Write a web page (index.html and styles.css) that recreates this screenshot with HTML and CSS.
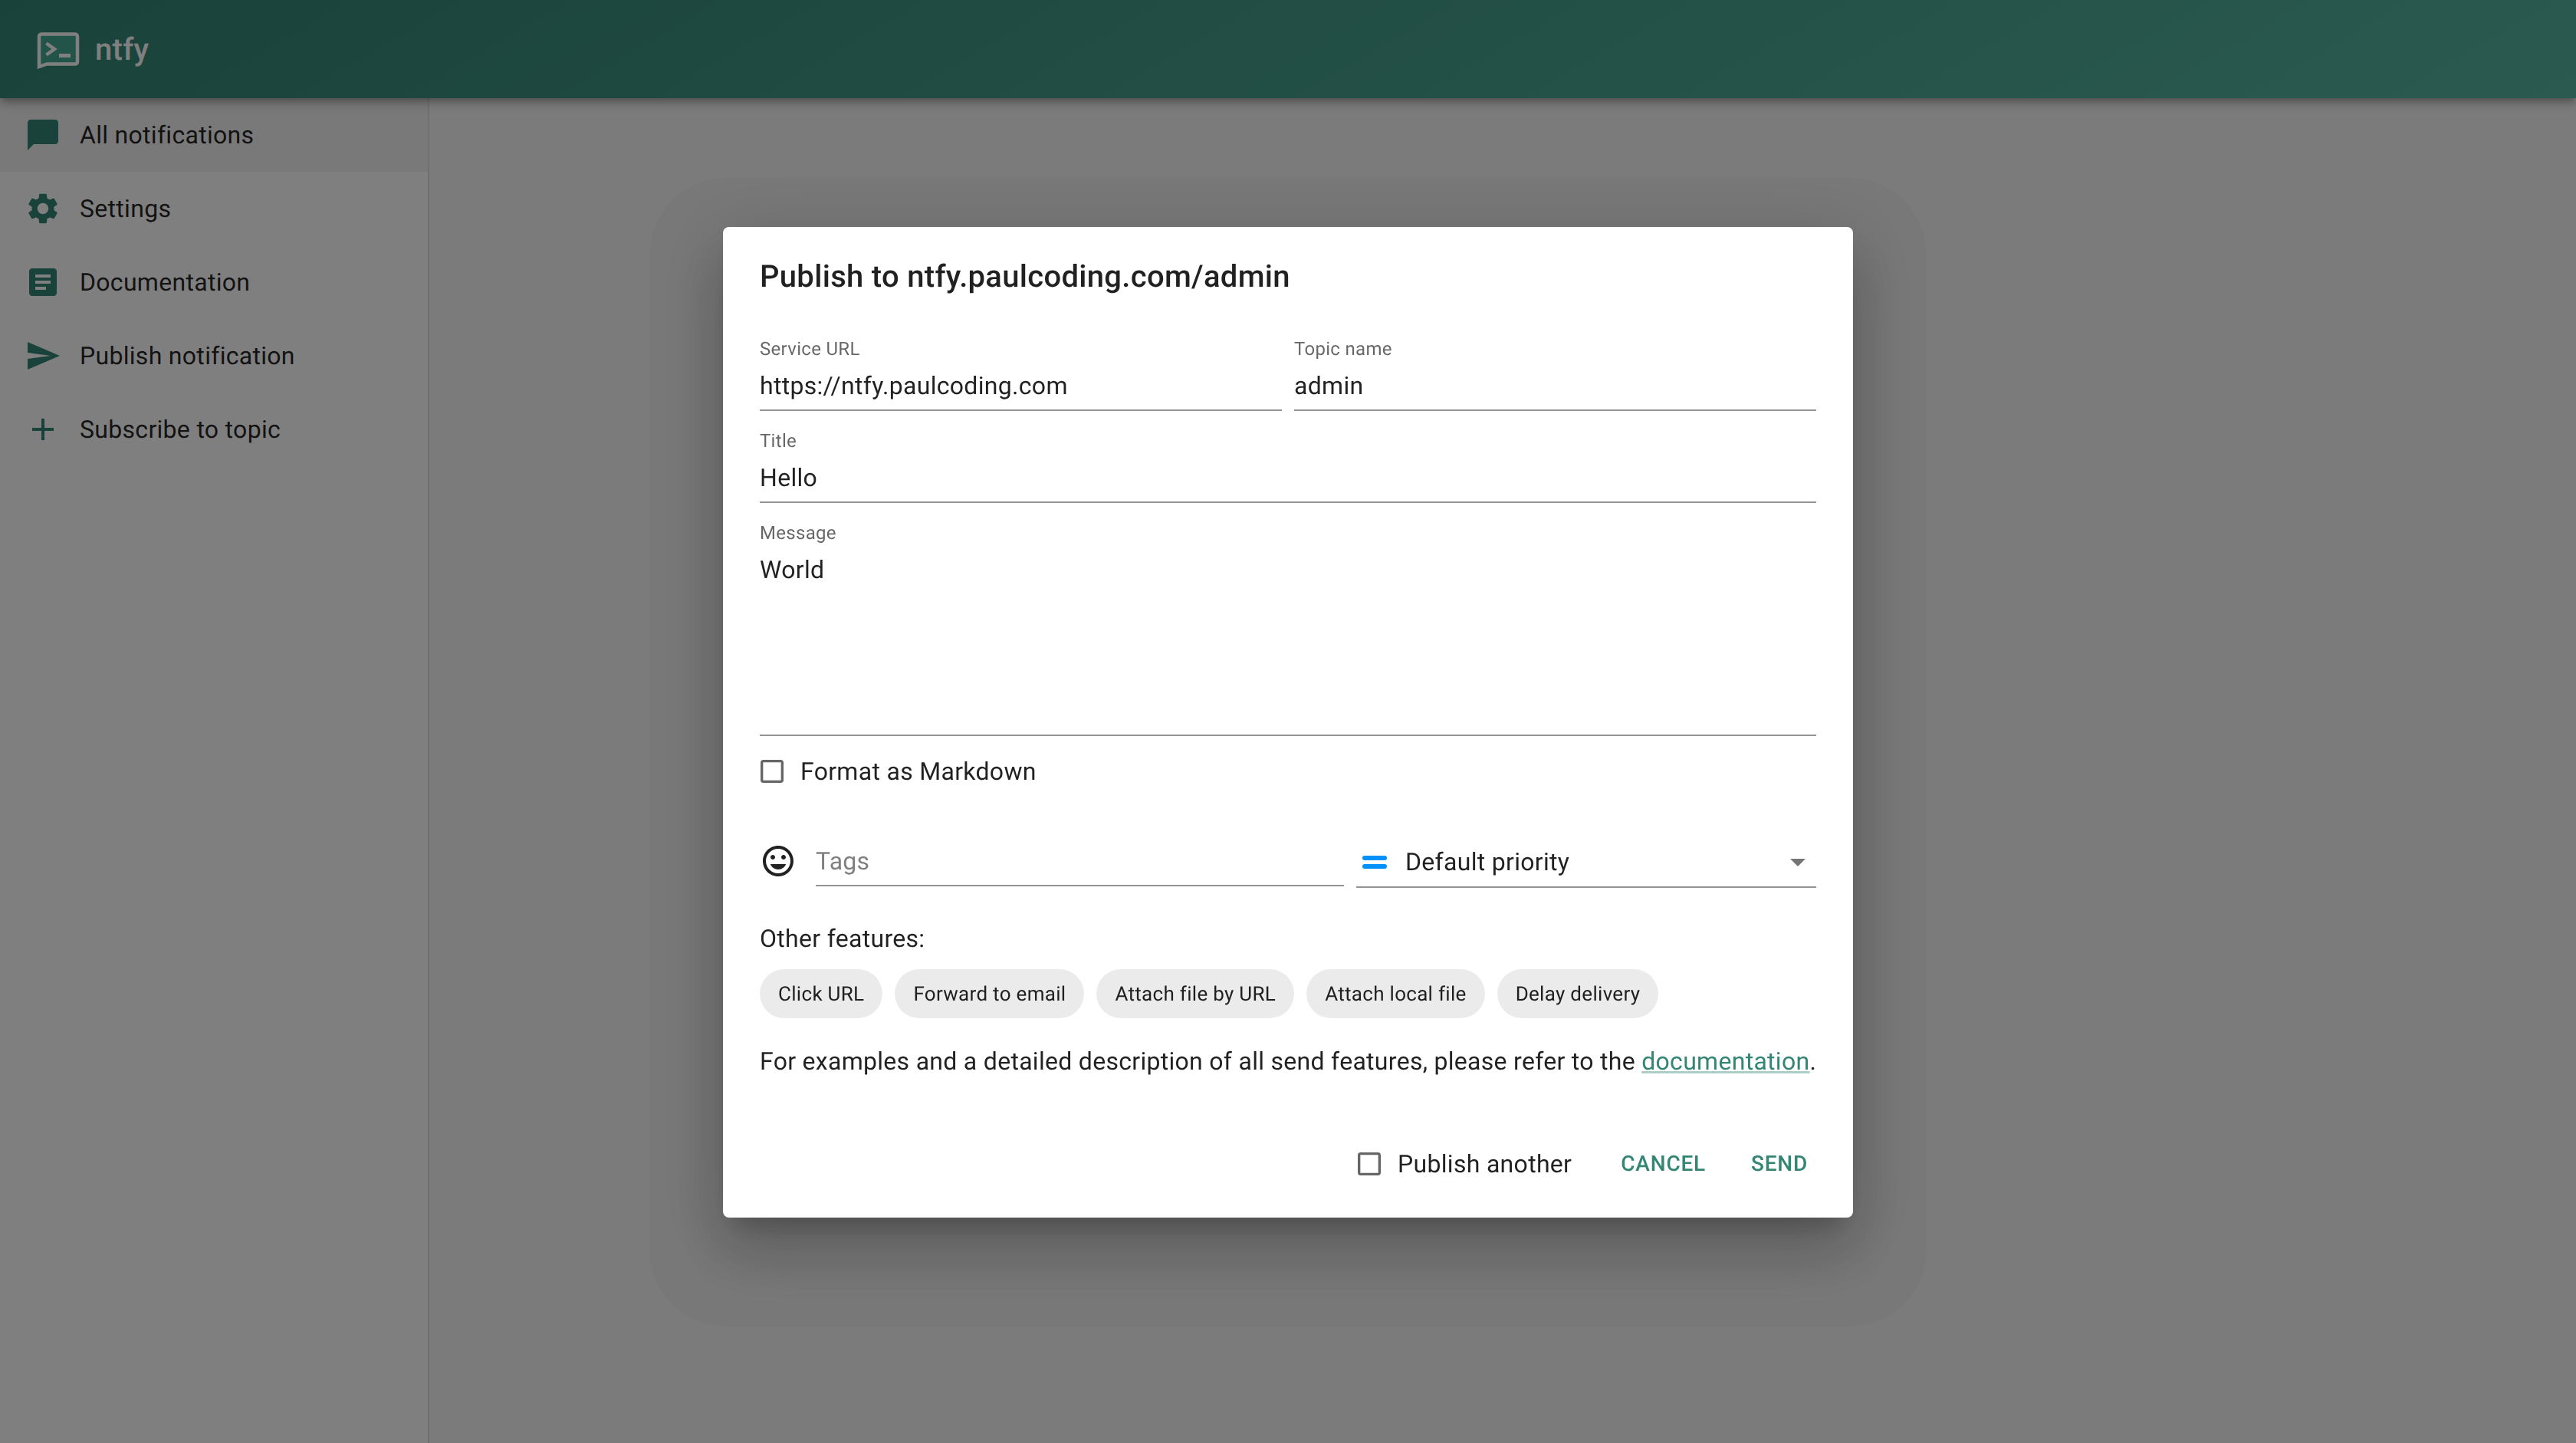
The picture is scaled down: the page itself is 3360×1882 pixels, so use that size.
FILE: index.html
```html
<!DOCTYPE html>
<html lang="en">
<head>
    <meta charset="UTF-8">
    <meta name="viewport" content="width=device-width, initial-scale=1.0">
    <title>ntfy</title>
    <link rel="stylesheet" href="styles.css">
</head>
<body>
    <header class="app-bar">
        <svg class="logo" viewBox="0 0 56 48">
            <path d="M6 2.500h44a3 3 0 0 1 3 3v33a3 3 0 0 1-3 3H13L3 45V5.500a3 3 0 0 1 3-3z" fill="#46a894" stroke="#fff" stroke-width="4.500"/>
            <path d="M12.500 14.500L23 22l-10.500 7.500" fill="none" stroke="#fff" stroke-width="4.500"/>
            <path d="M29 30.500h15" fill="none" stroke="#fff" stroke-width="5"/>
        </svg>
        <span class="app-name">ntfy</span>
    </header>

    <div class="layout">
        <nav class="sidebar">
            <a class="nav-item selected">
                <svg class="nav-icon" viewBox="0 0 24 24"><path d="M20 2H4c-1.1 0-1.99.9-1.99 2L2 22l4-4h14c1.1 0 2-.9 2-2V4c0-1.1-.9-2-2-2z"/></svg>
                <span>All notifications</span>
            </a>
            <a class="nav-item">
                <svg class="nav-icon" viewBox="0 0 24 24"><path d="M19.14 12.94c.04-.3.06-.61.06-.94 0-.32-.02-.64-.07-.94l2.03-1.58c.18-.14.23-.41.12-.61l-1.92-3.32c-.12-.22-.37-.29-.59-.22l-2.39.96c-.5-.38-1.03-.7-1.62-.94l-.36-2.54c-.04-.24-.24-.41-.48-.41h-3.84c-.24 0-.43.17-.47.41l-.36 2.54c-.59.24-1.13.57-1.62.94l-2.39-.96c-.22-.08-.47 0-.59.22L2.74 8.87c-.12.21-.08.47.12.61l2.03 1.58c-.05.3-.09.63-.09.94s.02.64.07.94l-2.03 1.58c-.18.14-.23.41-.12.61l1.92 3.32c.12.22.37.29.59.22l2.39-.96c.5.38 1.03.7 1.62.94l.36 2.54c.05.24.24.41.48.41h3.84c.24 0 .44-.17.47-.41l.36-2.54c.59-.24 1.13-.56 1.62-.94l2.39.96c.22.08.47 0 .59-.22l1.92-3.32c.12-.22.07-.47-.12-.61l-2.01-1.58zM12 15.6c-1.98 0-3.6-1.62-3.6-3.6s1.62-3.6 3.6-3.6 3.6 1.62 3.6 3.6-1.62 3.6-3.6 3.6z"/></svg>
                <span>Settings</span>
            </a>
            <a class="nav-item">
                <svg class="nav-icon" viewBox="0 0 24 24"><path d="M19 3H5c-1.1 0-2 .9-2 2v14c0 1.1.9 2 2 2h14c1.1 0 2-.9 2-2V5c0-1.1-.9-2-2-2zm-5 14H7v-2h7v2zm3-4H7v-2h10v2zm0-4H7V7h10v2z"/></svg>
                <span>Documentation</span>
            </a>
            <a class="nav-item">
                <svg class="nav-icon" viewBox="0 0 24 24"><path d="M2.01 21 23 12 2.01 3 2 10l15 2-15 2z"/></svg>
                <span>Publish notification</span>
            </a>
            <a class="nav-item">
                <svg class="nav-icon" viewBox="0 0 24 24"><path d="M19 13h-6v6h-2v-6H5v-2h6V5h2v6h6v2z"/></svg>
                <span>Subscribe to topic</span>
            </a>
        </nav>
        <main class="content"></main>
    </div>

    <div class="backdrop"></div>

    <div class="dialog-wrap">
        <section class="dialog">
            <h2 class="dialog-title">Publish to ntfy.paulcoding.com/admin</h2>

            <div class="dialog-body">
                <div class="field-row">
                    <div class="field">
                        <label class="field-label">Service URL</label>
                        <div class="field-value">https://ntfy.paulcoding.com</div>
                    </div>
                    <div class="field">
                        <label class="field-label">Topic name</label>
                        <div class="field-value">admin</div>
                    </div>
                </div>

                <div class="field field-spaced">
                    <label class="field-label">Title</label>
                    <div class="field-value">Hello</div>
                </div>

                <div class="field field-spaced">
                    <label class="field-label">Message</label>
                    <div class="field-value field-multiline">World</div>
                </div>

                <div class="check-row markdown-row">
                    <svg class="check-icon" viewBox="0 0 24 24"><path d="M19 5v14H5V5h14m0-2H5c-1.1 0-2 .9-2 2v14c0 1.1.9 2 2 2h14c1.1 0 2-.9 2-2V5c0-1.1-.9-2-2-2z"/></svg>
                    <span>Format as Markdown</span>
                </div>

                <div class="tags-row">
                    <div class="emoji-cell">
                        <svg class="emoji-icon" viewBox="0 0 24 24"><path d="M11.99 2C6.47 2 2 6.48 2 12s4.47 10 9.99 10C17.52 22 22 17.52 22 12S17.52 2 11.99 2zM12 20c-4.42 0-8-3.58-8-8s3.58-8 8-8 8 3.58 8 8-3.58 8-8 8zm3.5-9c.83 0 1.5-.67 1.5-1.5S16.33 8 15.5 8 14 8.67 14 9.5s.67 1.5 1.5 1.5zm-7 0c.83 0 1.5-.67 1.5-1.5S9.33 8 8.5 8 7 8.67 7 9.5 7.67 11 8.5 11zm3.5 6.5c2.33 0 4.31-1.46 5.11-3.5H6.89c.8 2.04 2.78 3.5 5.11 3.5z"/></svg>
                    </div>
                    <div class="tags-input">Tags</div>
                    <div class="priority-select">
                        <svg class="priority-icon" viewBox="0 0 32 17">
                            <rect x="0" y="0" width="32" height="6" rx="3"/>
                            <rect x="0" y="11" width="32" height="6" rx="3"/>
                        </svg>
                        <span class="priority-text">Default priority</span>
                        <svg class="select-arrow" viewBox="0 0 20 10"><path d="M0 0h20L10 10z"/></svg>
                    </div>
                </div>

                <div class="features-label">Other features:</div>
                <div class="chips">
                    <span class="chip">Click URL</span>
                    <span class="chip">Forward to email</span>
                    <span class="chip">Attach file by URL</span>
                    <span class="chip">Attach local file</span>
                    <span class="chip">Delay delivery</span>
                </div>

                <p class="help-text">For examples and a detailed description of all send features, please refer to the <a class="help-link">documentation</a>.</p>
            </div>

            <div class="dialog-actions">
                <div class="check-row publish-another">
                    <svg class="check-icon" viewBox="0 0 24 24"><path d="M19 5v14H5V5h14m0-2H5c-1.1 0-2 .9-2 2v14c0 1.1.9 2 2 2h14c1.1 0 2-.9 2-2V5c0-1.1-.9-2-2-2z"/></svg>
                    <span>Publish another</span>
                </div>
                <button class="text-button">Cancel</button>
                <button class="text-button">Send</button>
            </div>
        </section>
    </div>
</body>
</html>
```

FILE: styles.css
```css
* {
    box-sizing: border-box;
}

html, body {
    height: 100%;
}

body {
    margin: 0;
    font-family: Roboto, "Liberation Sans", sans-serif;
    font-size: 32px;
    letter-spacing: 0.00938em;
    text-rendering: geometricPrecision;
    color: rgba(0, 0, 0, 0.87);
    background-color: #f7f7f7;
    display: flex;
    flex-direction: column;
    overflow: hidden;
}

.app-bar {
    position: relative;
    z-index: 2;
    height: 128px;
    flex-shrink: 0;
    padding-left: 48px;
    display: flex;
    align-items: center;
    background: linear-gradient(150deg, #338574 0%, #56b5a0 100%);
    box-shadow: 0 4px 8px -2px rgba(0, 0, 0, 0.2), 0 8px 10px 0 rgba(0, 0, 0, 0.14), 0 2px 20px 0 rgba(0, 0, 0, 0.12);
}

.logo {
    width: 56px;
    height: 48px;
    margin-top: 4px;
    margin-right: 20px;
}

.app-name {
    font-size: 40px;
    font-weight: 500;
    letter-spacing: 0.0075em;
    color: #fff;
}

.layout {
    flex: 1;
    display: flex;
}

.sidebar {
    width: 560px;
    background-color: #fff;
    border-right: 2px solid rgba(0, 0, 0, 0.12);
}

.nav-item {
    height: 96px;
    padding-left: 32px;
    display: flex;
    align-items: center;
}

.nav-item.selected {
    background-color: rgba(0, 0, 0, 0.05);
}

.nav-icon {
    width: 48px;
    height: 48px;
    margin-right: 24px;
    fill: #338574;
}

.content {
    flex: 1;
}

.backdrop {
    position: fixed;
    inset: 0;
    z-index: 5;
    background-color: rgba(0, 0, 0, 0.5);
}

.dialog-wrap {
    position: fixed;
    inset: 0;
    z-index: 6;
    padding-top: 2px;
    display: flex;
    align-items: center;
    justify-content: center;
}

.dialog {
    position: relative;
    width: 1474px;
    background-color: #fff;
    border-radius: 8px;
    box-shadow: 0 22px 30px -14px rgba(0, 0, 0, 0.2), 0 48px 76px 6px rgba(0, 0, 0, 0.14), 0 18px 92px 16px rgba(0, 0, 0, 0.12);
}

/* outer edge of the shadow, it shows as a soft step in the backdrop */
.dialog::before {
    content: "";
    position: absolute;
    inset: -64px -96px -142px;
    z-index: -1;
    background-color: rgba(0, 0, 0, 0.025);
    border-radius: 100px;
}

.dialog-title {
    margin: 0;
    padding: 33px 48px 31px;
    font-size: 40px;
    font-weight: 500;
    line-height: 64px;
    letter-spacing: 0.0075em;
}

.dialog-body {
    padding: 16px 48px 0;
}

.field-row {
    display: flex;
    gap: 16px;
}

.field-row .field {
    flex: 1;
}

.field-spaced {
    margin-top: 24px;
}

.field-label {
    display: block;
    height: 32px;
    font-size: 24px;
    line-height: 30px;
    color: rgba(0, 0, 0, 0.6);
}

.field-value {
    padding: 8px 0;
    line-height: 46px;
    border-bottom: 2px solid rgba(0, 0, 0, 0.42);
}

.field-multiline {
    height: 248px;
}

.check-row {
    display: flex;
    align-items: center;
}

.check-icon {
    width: 40px;
    height: 40px;
    margin-right: 17px;
    fill: rgba(0, 0, 0, 0.6);
}

.markdown-row {
    height: 60px;
    margin-top: 16px;
    margin-left: -4px;
}

.tags-row {
    margin-top: 54px;
    display: flex;
    align-items: flex-start;
}

.emoji-cell {
    width: 73px;
    padding-top: 9px;
    flex-shrink: 0;
}

.emoji-icon {
    display: block;
    width: 48px;
    height: 48px;
    fill: rgba(0, 0, 0, 0.87);
}

.tags-input {
    flex: 1;
    margin-right: 16px;
    padding: 10px 0 8px;
    line-height: 46px;
    color: rgba(0, 0, 0, 0.5);
    border-bottom: 2px solid rgba(0, 0, 0, 0.42);
}

.priority-select {
    width: 600px;
    padding: 11px 14px 9px 8px;
    display: flex;
    align-items: center;
    line-height: 46px;
    border-bottom: 2px solid rgba(0, 0, 0, 0.42);
}

.priority-icon {
    width: 32px;
    height: 17px;
    margin-right: 24px;
    fill: #0091ff;
}

.priority-text {
    flex: 1;
}

.select-arrow {
    width: 20px;
    height: 10px;
    margin-top: 2px;
    fill: rgba(0, 0, 0, 0.54);
}

.features-label {
    margin-top: 42px;
    line-height: 48px;
}

.chips {
    margin-top: 16px;
    display: flex;
    gap: 16px;
}

.chip {
    height: 64px;
    padding: 2px 24px 0;
    display: flex;
    align-items: center;
    font-size: 26px;
    background-color: rgba(0, 0, 0, 0.08);
    border-radius: 32px;
}

.help-text {
    margin: 32px 0 0;
    line-height: 48px;
    letter-spacing: 0.29px;
    white-space: nowrap;
}

.help-link {
    color: #338574;
    text-decoration: underline;
    text-decoration-color: rgba(51, 133, 116, 0.4);
}

.dialog-actions {
    margin-top: 72px;
    padding: 0 32px 32px 0;
    display: flex;
    justify-content: flex-end;
    align-items: center;
}

.publish-another {
    margin-right: 48px;
}

.text-button {
    height: 76px;
    min-width: 128px;
    padding: 0 16px 2px;
    margin-left: 16px;
    border: none;
    background: none;
    font-family: inherit;
    font-size: 28px;
    font-weight: 500;
    letter-spacing: 0.02857em;
    text-rendering: inherit;
    text-transform: uppercase;
    color: #338574;
}

.publish-another + .text-button {
    margin-left: 0;
}
```
